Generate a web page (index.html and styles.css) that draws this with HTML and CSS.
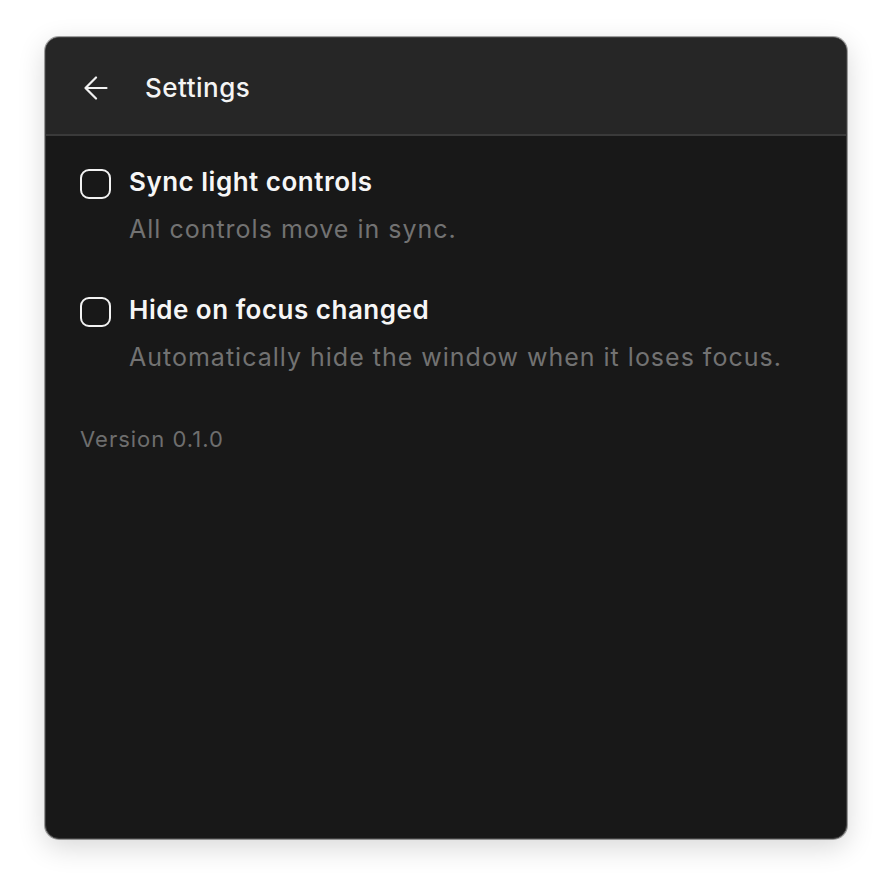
FILE: index.html
```html
<!DOCTYPE html>
<html>
<head>
<meta charset="utf-8">
<link rel="stylesheet" href="styles.css">
</head>
<body>
<div class="window">
  <header class="header">
    <button class="back" aria-label="Back">
      <svg width="24" height="24" viewBox="0 0 24 24" fill="none" stroke="#f2f2f2" stroke-width="2.2" stroke-linecap="round" stroke-linejoin="round"><path d="M1.5 12H22.5M12 1.5L1.5 12L12 22.5"/></svg>
    </button>
    <h1 class="title">Settings</h1>
  </header>
  <main class="content">
    <div class="option">
      <span class="check"></span>
      <div class="text">
        <div class="label">Sync light controls</div>
        <div class="desc">All controls move in sync.</div>
      </div>
    </div>
    <div class="option">
      <span class="check"></span>
      <div class="text">
        <div class="label">Hide on focus changed</div>
        <div class="desc">Automatically hide the window when it loses focus.</div>
      </div>
    </div>
    <div class="version">Version 0.1.0</div>
  </main>
</div>
</body>
</html>
```
FILE: styles.css
```css
* { box-sizing: border-box; }
html, body { margin: 0; }
body {
  background: #ffffff;
  font-family: Inter, "Noto Sans", sans-serif;
  padding: 37px 45px;
}
.window {
  width: 802px;
  height: 802px;
  border-radius: 14px;
  border: 1px solid #3d3d3d;
  background: #181818;
  overflow: hidden;
  box-shadow: 0 8px 28px rgba(0,0,0,0.16), 0 0 0 1px rgba(0,0,0,0.35);
  display: flex;
  flex-direction: column;
}
.header {
  height: 98px;
  flex: none;
  background: #262626;
  border-bottom: 2px solid #3a3a3a;
  display: flex;
  align-items: center;
  padding-left: 38px;
  gap: 37px;
}
.back {
  background: none;
  border: 0;
  padding: 0;
  width: 24px;
  height: 24px;
  display: flex;
  margin-top: 4px;
}
.title {
  margin: 0;
  font-size: 26px;
  line-height: 32px;
  font-weight: 500;
  letter-spacing: 0.5px;
  color: #f4f4f4;
  margin-top: 3px;
}
.content {
  padding: 30px 34px 0 34px;
  display: flex;
  flex-direction: column;
}
.option {
  display: flex;
  gap: 18px;
  margin-bottom: 49px;
}
.check {
  width: 31px;
  height: 30px;
  flex: none;
  border: 2px solid #f2f2f2;
  border-radius: 9px;
  margin-top: 3px;
}
.label {
  font-size: 26px;
  line-height: 32px;
  font-weight: 600;
  letter-spacing: 0.5px;
  color: #f6f6f6;
}
.desc {
  margin-top: 15px;
  font-size: 25px;
  line-height: 32px;
  letter-spacing: 1px;
  color: #727272;
}
.version {
  margin-top: 3px;
  font-size: 22px;
  line-height: 28px;
  letter-spacing: 1px;
  color: #6e6e6e;
}
```
